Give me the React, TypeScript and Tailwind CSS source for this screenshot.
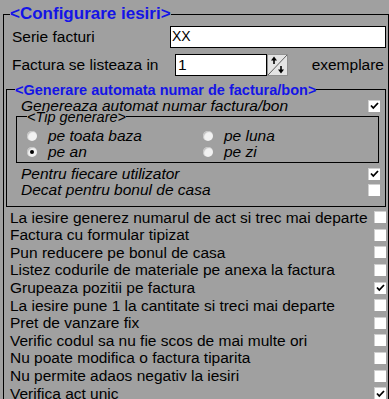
import type { ReactNode } from 'react'

const LIST_ROWS: { label: string; checked: boolean }[] = [
  { label: 'La iesire generez numarul de act si trec mai departe', checked: false },
  { label: 'Factura cu formular tipizat', checked: false },
  { label: 'Pun reducere pe bonul de casa', checked: false },
  { label: 'Listez codurile de materiale pe anexa la factura', checked: false },
  { label: 'Grupeaza pozitii pe factura', checked: true },
  { label: 'La iesire pune 1 la cantitate si treci mai departe', checked: false },
  { label: 'Pret de vanzare fix', checked: false },
  { label: 'Verific codul sa nu fie scos de mai multe ori', checked: false },
  { label: 'Nu poate modifica o factura tiparita', checked: false },
  { label: 'Nu permite adaos negativ la iesiri', checked: false },
  { label: 'Verifica act unic', checked: true },
]

function CheckBox({ checked }: { checked: boolean }) {
  return (
    <span className="w-[12px] h-[12px] shrink-0 bg-white border-l border-t border-[#d0d0d0] flex items-center justify-center">
      {checked && (
        <svg width="9" height="8" viewBox="0 0 9 8">
          <path d="M1 3.5 L3.3 6 L8 1" fill="none" stroke="#000" strokeWidth="1.8" />
        </svg>
      )}
    </span>
  )
}

function Radio({ checked, label }: { checked: boolean; label: string }) {
  return (
    <div className="flex items-center h-[16px]">
      <span className="w-[10px] h-[10px] rounded-full bg-[#f2f2f2] shadow-[inset_1px_1px_1px_#c0c0c0] flex items-center justify-center shrink-0">
        {checked && <span className="w-[4px] h-[4px] rounded-full bg-black" />}
      </span>
      <span className="ml-[11px] italic">{label}</span>
    </div>
  )
}

function Row({ children, checked }: { children: ReactNode; checked: boolean }) {
  return (
    <div className="flex items-center justify-between h-[16px] pl-[14px] pr-[5px] italic">
      <span>{children}</span>
      <CheckBox checked={checked} />
    </div>
  )
}

function SpinButton() {
  return (
    <div className="w-[21px] h-[22px] bg-[#e4e4e4] border border-[#909090] shrink-0">
      <svg width="19" height="20" viewBox="0 0 19 20">
        <line x1="0" y1="20" x2="19" y2="0" stroke="#606060" strokeWidth="1" />
        <path d="M6 1.5 L3 5.5 H9 Z" fill="#000" />
        <line x1="6" y1="4" x2="6" y2="9" stroke="#000" strokeWidth="1.6" />
        <path d="M13 18.5 L10 14.5 H16 Z" fill="#000" />
        <line x1="13" y1="11" x2="13" y2="16" stroke="#000" strokeWidth="1.6" />
      </svg>
    </div>
  )
}

export default function App() {
  return (
    <div className="w-[389px] h-[399px] overflow-hidden bg-[#a0a0a0] text-black text-[15.5px] font-['Liberation_Sans',Arial,sans-serif]">
      <fieldset className="mt-[5px] ml-[3px] w-[386px] border border-black pb-[4px]">
        <legend className="ml-[6px] text-[17px] leading-[18px] font-bold text-[#1414e6]">
          &lt;Configurare iesiri&gt;
        </legend>

        {/* Serie */}
        <div className="flex items-center mt-[2px] pl-[8px] pr-[2px]">
          <span className="w-[158px] shrink-0">Serie facturi</span>
          <div className="flex-1 h-[22px] bg-white border border-black flex items-center pl-[1px] text-[14px]">
            XX
          </div>
        </div>

        {/* Factura se listeaza */}
        <div className="flex items-center mt-[5px] pl-[8px] pr-[4px]">
          <span className="w-[163px] shrink-0">Factura se listeaza in</span>
          <div className="w-[92px] h-[22px] bg-white border border-black flex items-center pl-[2px]">1</div>
          <SpinButton />
          <span className="ml-auto">exemplare</span>
        </div>

        {/* Generare automata */}
        <fieldset className="mt-[5px] ml-[2px] w-[380px] border border-black pb-[8px]">
          <legend className="ml-[8px] text-[14.5px] leading-[16px] font-bold text-[#1414e6]">
            &lt;Generare automata numar de factura/bon&gt;
          </legend>
          <Row checked>Genereaza automat numar factura/bon</Row>

          <fieldset className="-mt-[3px] ml-[9px] mr-[6px] border border-black pb-[2px]">
            <legend className="ml-[10px] italic text-[14.5px] leading-[12px]">&lt;Tip generare&gt;</legend>
            <div className="grid grid-cols-[176px_1fr] pl-[10px] pt-[5px]">
              <Radio checked={false} label="pe toata baza" />
              <Radio checked={false} label="pe luna" />
              <Radio checked label="pe an" />
              <Radio checked={false} label="pe zi" />
            </div>
          </fieldset>

          <div className="mt-[3px]">
            <Row checked>Pentru fiecare utilizator</Row>
          </div>
          <Row checked={false}>Decat pentru bonul de casa</Row>
        </fieldset>

        {/* Optiuni */}
        <div className="mt-[2px] pl-[6px] pr-[2px]">
          {LIST_ROWS.map((row) => (
            <div key={row.label} className="flex items-center justify-between h-[17.6px]">
              <span>{row.label}</span>
              <CheckBox checked={row.checked} />
            </div>
          ))}
        </div>
      </fieldset>
    </div>
  )
}
